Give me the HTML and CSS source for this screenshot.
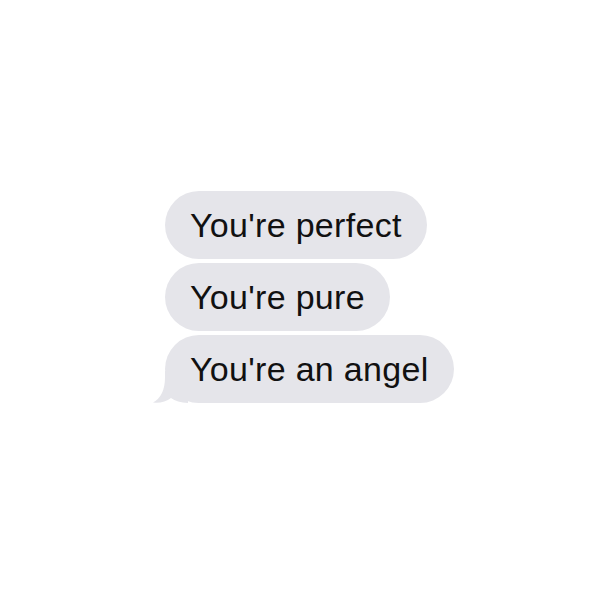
FILE: index.html
```html
<!DOCTYPE html>
<html>
<head>
<meta charset="utf-8">
<link rel="stylesheet" href="styles.css">
</head>
<body>
<div class="thread">
  <div class="bubble">You're perfect</div>
  <div class="bubble">You're pure</div>
  <div class="bubble last">You're an angel
    <svg class="tail" width="36" height="32" viewBox="0 0 36 32"><path d="M13 0 L13 6 Q13 25 1 31.6 Q12 32.5 19 27 Q25 31.6 36 32 L36 0 Z" fill="#e5e5ea"/></svg>
  </div>
</div>
</body>
</html>
```
FILE: styles.css
```css
html, body {
  margin: 0;
  padding: 0;
  background: #ffffff;
}
.thread {
  display: flex;
  flex-direction: column;
  align-items: flex-start;
  gap: 4px;
  padding: 191px 0 0 165px;
}
.bubble {
  position: relative;
  height: 68px;
  line-height: 68px;
  padding: 0 25px 0 25px;
  background: #e5e5ea;
  border-radius: 34px;
  font-family: "Liberation Sans", Arial, sans-serif;
  font-size: 34px;
  letter-spacing: 0.3px;
  color: #111111;
  white-space: nowrap;
}
.tail {
  position: absolute;
  left: -13px;
  bottom: 0;
  display: block;
}
```
